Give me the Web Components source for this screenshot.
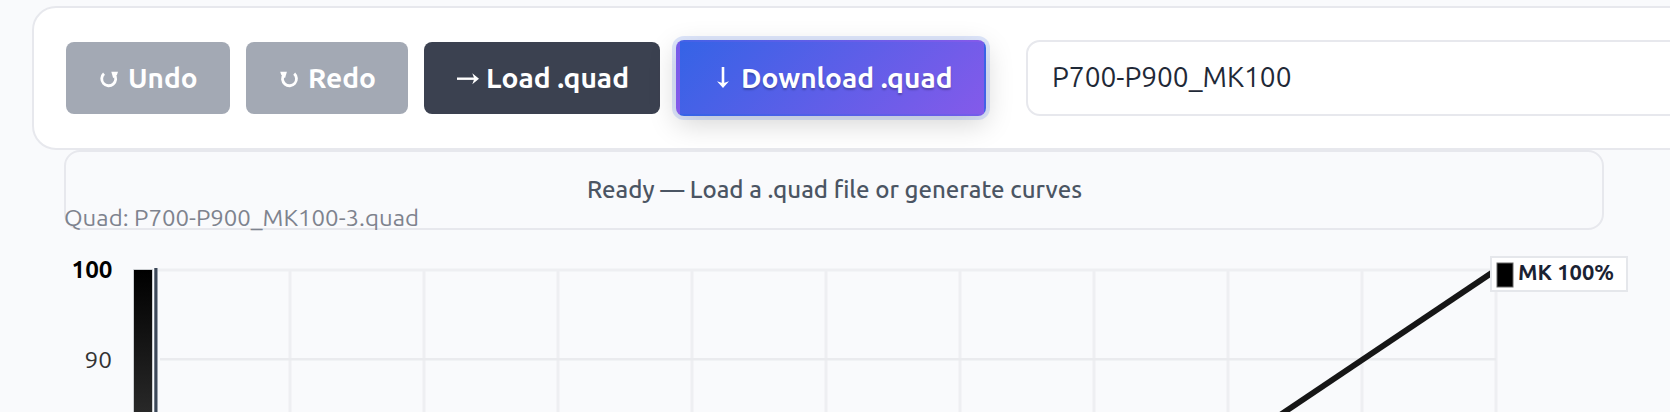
<!DOCTYPE html>
<html lang="en"><head><meta charset="utf-8"><title>Quad curves</title>
<style>
html,body{margin:0;height:412px;overflow:hidden;background:#f9fafc}
body{font-family:Ubuntu,"Noto Sans","Open Sans",sans-serif}
</style></head><body>
<quad-app></quad-app>
<script>
// Text run set to a fixed advance width.
class FitText extends HTMLElement{
  connectedCallback(){
    const a=n=>this.getAttribute(n);
    const w=+a('w'),s=+a('size'),h=Math.round(s*1.4),b=Math.round(s*1.08);
    this.attachShadow({mode:'open'}).innerHTML=`<style>:host{display:block;flex:none;width:${w}px;height:${h}px}svg{display:block;overflow:visible}text{font-family:Ubuntu,"Noto Sans","Open Sans",sans-serif;fill:currentColor}</style>
    <svg width="${w}" height="${h}"><text x="0" y="${b}" font-size="${s}" font-weight="${a('weight')||400}" textLength="${w}" lengthAdjust="spacingAndGlyphs">${a('text')}</text></svg>`;
  }
}
customElements.define('fit-text',FitText);

class ToolButton extends HTMLElement{
  connectedCallback(){
    this.attachShadow({mode:'open'}).innerHTML=`<style>
    :host{display:flex;align-items:flex-start;box-sizing:border-box;flex:none;height:72px;border-radius:8px;color:#fff;padding-top:16px;background:#a3a9b4}
    :host([kind=dark]){background:#3b4150}
    :host([kind=primary]){height:76px;padding-top:16px;border:2px solid transparent;border-left-width:4px;background-image:linear-gradient(135deg,#3563e6,#845aea);box-shadow:0 0 0 4px rgba(47,100,230,.16),0 8px 28px rgba(0,0,0,.17);text-shadow:0 2px 2px rgba(0,0,0,.25)}
    ::slotted(svg){display:block;flex:none;overflow:visible}
    </style><slot></slot>`;
  }
}
customElements.define('tool-button',ToolButton);

class NameField extends HTMLElement{
  connectedCallback(){
    this.attachShadow({mode:'open'}).innerHTML=`<style>:host{display:block;box-sizing:border-box;flex:none;width:760px;height:76px;border:2px solid #e7e8ed;border-radius:14px;background:#fff;color:#1f2937;padding:15px 0 0 24px}</style><slot></slot>`;
  }
}
customElements.define('name-field',NameField);

class ToolBar extends HTMLElement{
  connectedCallback(){
    this.attachShadow({mode:'open'}).innerHTML=`<style>
    :host{display:flex;align-items:center;box-sizing:border-box;width:1800px;height:144px;margin-left:32px;padding-left:32px;border:2px solid #e7e8ed;border-radius:24px;background:#fff}
    tool-button,name-field{margin-right:16px}
    .u{width:164px;margin-right:16px}.r{width:162px}.l{width:236px}.d{width:310px;margin-right:40px}
    tool-button{box-sizing:border-box}
    fit-text{margin-top:-.5px}
    svg{display:block;flex:none;overflow:visible;fill:none;stroke:#fff}
    </style>
    <tool-button class="u"><svg style="margin-left:34px" width="28" height="40"><path d="M4 15.6A7 7 0 1 0 14.2 16.4" stroke-width="2.8"/><path d="M11.3 13.8H18L17 16.8L13.2 20.3Z" fill="#fff" stroke="none"/></svg><fit-text w="69.5" size="28" weight="600" text="Undo"></fit-text></tool-button>
    <tool-button class="r"><svg style="margin-left:34px" width="28" height="40"><path d="M14.2 15.6A7 7 0 1 1 4 16.4" stroke-width="2.8"/><path d="M6.9 13.8H.2L1.2 16.8L5 20.3Z" fill="#fff" stroke="none"/></svg><fit-text w="68" size="28" weight="600" text="Redo"></fit-text></tool-button>
    <tool-button class="l" kind="dark"><svg style="margin-left:33px" width="29" height="40"><path d="M0 20.7H19" stroke-width="2.4"/><path d="M15.3 15.2L22 20.7L15.3 26.2L17.3 20.7Z" fill="#fff" stroke="none"/></svg><fit-text w="143" size="28" weight="600" text="Load .quad"></fit-text></tool-button>
    <tool-button class="d" kind="primary"><svg style="margin-left:36.5px" width="24" height="40"><path d="M6 9V27" stroke-width="2.6"/><path d="M0 23.2L6 30L12 23.2L6 25.2Z" fill="#fff" stroke="none"/></svg><fit-text w="211.5" size="28" weight="600" text="Download .quad"></fit-text></tool-button>
    <name-field><fit-text w="239.5" size="28" text="P700-P900_MK100"></fit-text></name-field>`;
  }
}
customElements.define('tool-bar',ToolBar);

class StatusBox extends HTMLElement{
  connectedCallback(){
    this.attachShadow({mode:'open'}).innerHTML=`<style>:host{display:flex;justify-content:center;box-sizing:border-box;width:1540px;height:80px;margin-left:64px;padding-top:19px;border:2px solid #e7e8ed;border-radius:16px;color:#4b5563}</style><slot></slot>`;
  }
}
customElements.define('status-box',StatusBox);

class CurveChart extends HTMLElement{
  connectedCallback(){
    let v='';for(let i=1;i<=10;i++){v+=`<path d="M${156+134*i} 270V412"/>`}
    this.attachShadow({mode:'open'}).innerHTML=`<style>:host{display:block;width:1670px;height:210px}svg{display:block;overflow:visible}text{font-family:Ubuntu,"Noto Sans","Open Sans",sans-serif}</style>
    <svg width="1670" height="210" viewBox="0 202 1670 210">
    <text x="64" y="226" font-size="22.5" fill="#7e838e" textLength="355" lengthAdjust="spacingAndGlyphs">Quad: P700-P900_MK100-3.quad</text>
    <text x="71.5" y="278" font-size="24.5" font-weight="700" fill="#000" textLength="41" lengthAdjust="spacingAndGlyphs">100</text>
    <text x="84.5" y="368" font-size="22.5" fill="#333" textLength="27.5" lengthAdjust="spacingAndGlyphs">90</text>
    <g stroke="#eeeff2" stroke-width="3" fill="none"><path d="M158 270H1497"/>${v}</g>
    <path d="M160 359.3H1496" stroke="#eaebee" stroke-width="2.4"/>
    <defs><linearGradient id="g" gradientUnits="userSpaceOnUse" x1="0" y1="270" x2="0" y2="1170"><stop stop-color="#000"/><stop offset="1" stop-color="#fff"/></linearGradient></defs>
    <path d="M133.3 269.3H152.7V420H133.3Z" fill="#b9bcc1"/><path d="M134 270H152V420H134Z" fill="url(#g)"/>
    <path d="M156 268V412" stroke="#a4abb6" stroke-width="4"/><path d="M155.8 268V412" stroke="#3d4858" stroke-width="2.6"/>
    <path d="M1228 450L1496 270" stroke="#161616" stroke-width="5.8"/>
    <rect x="1491" y="257" width="136" height="34" fill="#fff" stroke="#e5e7eb" stroke-width="2"/>
    <rect x="1497" y="263" width="16" height="24" fill="#000" stroke="#666" stroke-width="1"/>
    <text x="1518" y="280" font-size="22.5" font-weight="600" fill="#1a2233" textLength="96" lengthAdjust="spacingAndGlyphs">MK 100%</text>
    </svg>`;
  }
}
customElements.define('curve-chart',CurveChart);

class QuadApp extends HTMLElement{
  connectedCallback(){
    this.attachShadow({mode:'open'}).innerHTML=`<style>:host{display:block;width:1670px;height:412px;overflow:hidden;padding-top:6px;box-sizing:border-box}curve-chart{margin-top:-28px}</style>
    <tool-bar></tool-bar><status-box><fit-text w="495" size="25" weight="500" text="Ready — Load a .quad file or generate curves"></fit-text></status-box><curve-chart></curve-chart>`;
  }
}
customElements.define('quad-app',QuadApp);
</script></body></html>
